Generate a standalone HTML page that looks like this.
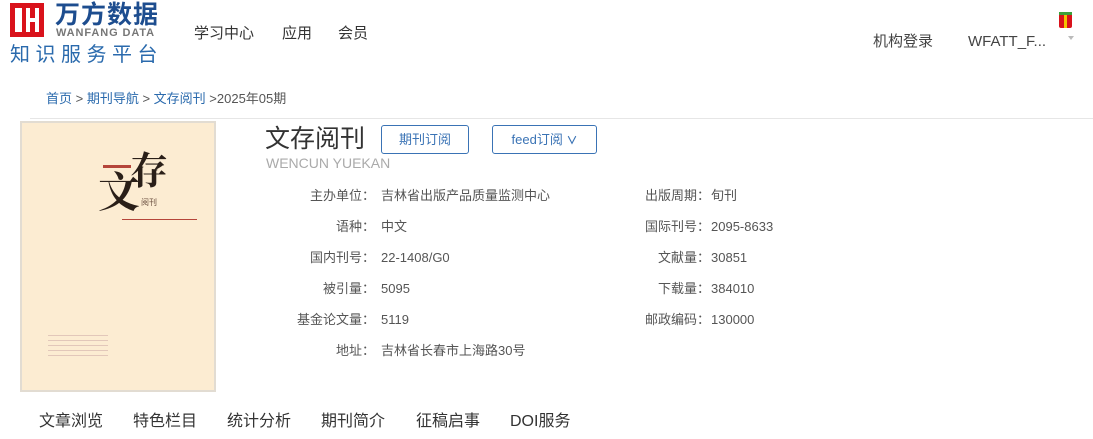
<!DOCTYPE html>
<html><head><meta charset="utf-8"><style>
*{margin:0;padding:0;box-sizing:border-box}
body{width:1093px;height:439px;background:#fff;position:relative;overflow:hidden;font-family:"Liberation Sans","Noto Sans CJK SC",sans-serif;color:#333}
.a{position:absolute;white-space:nowrap}
.lbl{font-size:13px;color:#555;line-height:20px}
.btn{position:absolute;border:1px solid #3a73b5;border-radius:3px;color:#3a73b5;font-size:13px;text-align:center;line-height:27px;height:29px}
.t{font-size:16px;color:#333;line-height:20px;top:412px}
</style></head><body>
<!-- logo -->
<div class="a" style="left:10px;top:3px;width:34px;height:34px;background:#d9121b"></div>
<div class="a" style="left:15px;top:8px;width:7px;height:24px;background:#fff"></div>
<div class="a" style="left:26px;top:8px;width:13px;height:24px;background:#fff"></div>
<div class="a" style="left:30px;top:8px;width:5px;height:10px;background:#d9121b"></div>
<div class="a" style="left:30px;top:22px;width:5px;height:10px;background:#d9121b"></div>
<div class="a" style="left:55px;top:2px;font-size:25px;line-height:26px;font-weight:bold;color:#1d4d8f;letter-spacing:1px">万方数据</div>
<div class="a" style="left:56px;top:28px;font-size:11px;line-height:11px;font-weight:bold;color:#777;letter-spacing:.9px">WANFANG DATA</div>
<div class="a" style="left:10px;top:43px;font-size:20px;line-height:24px;color:#2a6aad;letter-spacing:5.5px">知识服务平台</div>
<div class="a" style="left:194px;top:24px;font-size:15px;line-height:20px;color:#333">学习中心</div>
<div class="a" style="left:282px;top:24px;font-size:15px;line-height:20px;color:#333">应用</div>
<div class="a" style="left:338px;top:24px;font-size:15px;line-height:20px;color:#333">会员</div>
<div class="a" style="left:873px;top:32px;font-size:15px;line-height:20px;color:#444">机构登录</div>
<div class="a" style="left:968px;top:32px;font-size:15px;line-height:20px;color:#444">WFATT_F...</div>
<div class="a" style="left:1059px;top:13px;width:13px;height:15px;background:#d9121b;border-radius:2px"></div>
<div class="a" style="left:1064px;top:13px;width:3px;height:15px;background:#f3c300"></div>
<div class="a" style="left:1059px;top:12px;width:13px;height:3px;background:#3aa03a"></div>
<div class="a" style="left:1068px;top:36px;border:3px solid transparent;border-top:4px solid #bbb"></div>
<!-- breadcrumb -->
<div class="a" style="left:46px;top:89px;font-size:13px;line-height:20px;color:#2a6aad">首页 <span style="color:#555">&gt;</span> 期刊导航 <span style="color:#555">&gt;</span> 文存阅刊 <span style="color:#555">&gt;2025年05期</span></div>
<div class="a" style="left:30px;top:118px;width:1063px;height:1px;background:#e6e6e6"></div>
<!-- cover -->
<div class="a" style="left:20px;top:121px;width:196px;height:271px;background:#fcecd2;border:2px solid #e2dcd2"></div>
<div class="a" style="left:103px;top:165px;width:28px;height:3px;background:#b5453a"></div>
<div class="a" style="left:98px;top:168px;font-size:42px;line-height:44px;font-family:'Noto Serif CJK SC',serif;color:#2a1f18;font-weight:bold">文</div>
<div class="a" style="left:130px;top:148px;font-size:38px;line-height:40px;font-family:'Noto Serif CJK SC',serif;color:#2a1f18;font-weight:bold">存</div>
<div class="a" style="left:141px;top:198px;font-size:8px;line-height:10px;color:#6b5040">阅刊</div>
<div class="a" style="left:122px;top:219px;width:75px;height:1px;background:#b5453a"></div>
<div class="a" style="left:48px;top:333px;width:60px;height:24px;background:repeating-linear-gradient(#fcecd2 0 2px,#e2c7ba 2px 3px,#fcecd2 3px 5px)"></div>
<!-- title -->
<div class="a" style="left:265px;top:123px;font-size:25px;line-height:32px;color:#333">文存阅刊</div>
<div class="btn" style="left:381px;top:125px;width:88px">期刊订阅</div>
<div class="btn" style="left:492px;top:125px;width:105px">feed订阅 <b style="font-size:11px">&#8744;</b></div>
<div class="a" style="left:266px;top:155px;font-size:14px;line-height:16px;color:#aaa">WENCUN YUEKAN</div>
<div class="a lbl" style="right:718px;top:186px">主办单位：</div>
<div class="a lbl" style="left:381px;top:186px">吉林省出版产品质量监测中心</div>
<div class="a lbl" style="right:718px;top:217px">语种：</div><div class="a lbl" style="left:381px;top:217px">中文</div>
<div class="a lbl" style="right:718px;top:248px">国内刊号：</div><div class="a lbl" style="left:381px;top:248px">22-1408/G0</div>
<div class="a lbl" style="right:718px;top:279px">被引量：</div><div class="a lbl" style="left:381px;top:279px">5095</div>
<div class="a lbl" style="right:718px;top:310px">基金论文量：</div><div class="a lbl" style="left:381px;top:310px">5119</div>
<div class="a lbl" style="right:718px;top:341px">地址：</div><div class="a lbl" style="left:381px;top:341px">吉林省长春市上海路30号</div>
<div class="a lbl" style="right:383px;top:186px">出版周期：</div><div class="a lbl" style="left:711px;top:186px">旬刊</div>
<div class="a lbl" style="right:383px;top:217px">国际刊号：</div><div class="a lbl" style="left:711px;top:217px">2095-8633</div>
<div class="a lbl" style="right:383px;top:248px">文献量：</div><div class="a lbl" style="left:711px;top:248px">30851</div>
<div class="a lbl" style="right:383px;top:279px">下载量：</div><div class="a lbl" style="left:711px;top:279px">384010</div>
<div class="a lbl" style="right:383px;top:310px">邮政编码：</div><div class="a lbl" style="left:711px;top:310px">130000</div>
<!-- tabs -->
<div class="a t" style="left:39px">文章浏览</div>
<div class="a t" style="left:133px">特色栏目</div>
<div class="a t" style="left:227px">统计分析</div>
<div class="a t" style="left:321px">期刊简介</div>
<div class="a t" style="left:416px">征稿启事</div>
<div class="a t" style="left:510px">DOI服务</div>
</body></html>
